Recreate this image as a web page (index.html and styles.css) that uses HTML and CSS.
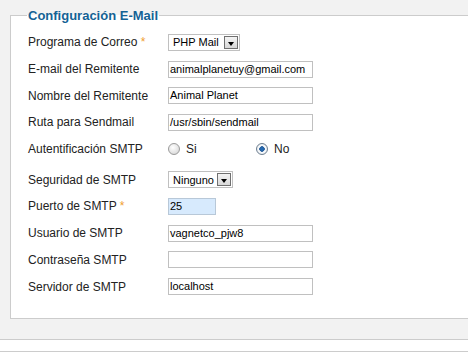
FILE: index.html
```html
<!DOCTYPE html>
<html>
<head>
    <meta charset="utf-8">
    <link rel="stylesheet" href="styles.css">
</head>
<body>
    <fieldset class="adminform">
        <legend>Configuración E-Mail</legend>

        <div class="row">
            <span class="label">Programa de Correo <span class="req">*</span></span>
            <span class="select w-mailer">PHP Mail<span class="arrow"></span></span>
        </div>
        <div class="row">
            <span class="label">E-mail del Remitente</span>
            <span class="input">animalplanetuy@gmail.com</span>
        </div>
        <div class="row">
            <span class="label">Nombre del Remitente</span>
            <span class="input">Animal Planet</span>
        </div>
        <div class="row">
            <span class="label">Ruta para Sendmail</span>
            <span class="input">/usr/sbin/sendmail</span>
        </div>
        <div class="row">
            <span class="label">Autentificación SMTP</span>
            <span class="radios">
                <span class="option"><span class="radio"></span>Si</span>
                <span class="option"><span class="radio checked"></span>No</span>
            </span>
        </div>
        <div class="row row-gap">
            <span class="label">Seguridad de SMTP</span>
            <span class="select w-secure">Ninguno<span class="arrow"></span></span>
        </div>
        <div class="row">
            <span class="label">Puerto de SMTP <span class="req">*</span></span>
            <span class="input short focused">25</span>
        </div>
        <div class="row">
            <span class="label">Usuario de SMTP</span>
            <span class="input">vagnetco_pjw8</span>
        </div>
        <div class="row">
            <span class="label">Contraseña SMTP</span>
            <span class="input"></span>
        </div>
        <div class="row">
            <span class="label">Servidor de SMTP</span>
            <span class="input">localhost</span>
        </div>
    </fieldset>

    <div class="footer"></div>
</body>
</html>
```

FILE: styles.css
```css
html {
    background: #fff;
}

body {
    margin: 0;
    background: #f2f2f2;
    font-family: "Liberation Sans", Arial, sans-serif;
    color: #222;
}

.adminform {
    margin: 8px 0 0 10px;
    padding: 6px 0 18px 17px;
    border: 1px solid #ccc;
    border-right: none;
    background: #fff;
}

.adminform legend {
    padding: 0 1px;
    margin-left: -1px;
    font-size: 13px;
    line-height: 15px;
    font-weight: bold;
    color: #146295;
}

.row {
    display: flex;
    align-items: center;
    height: 26.7px;
    font-size: 12px;
}

.row-gap {
    padding-top: 4px;
}

.label {
    width: 140px;
    flex: none;
}

.req {
    color: #f0a030;
}

.input {
    box-sizing: border-box;
    width: 145px;
    height: 17px;
    padding: 0 1px;
    border: 1px solid #c0c0c0;
    background: #fff;
    font-size: 11px;
    line-height: 15px;
    color: #000;
    white-space: nowrap;
    overflow: hidden;
}

.input.short {
    width: 48px;
}

.input.focused {
    background: #d7eafd;
    border-color: #b8c8d8;
}

.select {
    box-sizing: border-box;
    display: flex;
    align-items: center;
    justify-content: space-between;
    height: 17px;
    padding: 0 1px 0 4px;
    border: 1px solid #c0c0c0;
    background: #fff;
    font-size: 11px;
    color: #000;
    white-space: nowrap;
}

.w-mailer {
    width: 72px;
}

.w-secure {
    width: 65px;
}

.select .arrow {
    position: relative;
    flex: none;
    box-sizing: border-box;
    width: 14px;
    height: 13px;
    border: 1px solid #707070;
    background: linear-gradient(#f4f4f4, #d8d8d8);
}

.select .arrow::after {
    content: "";
    position: absolute;
    left: 3px;
    top: 5px;
    border-left: 3.5px solid transparent;
    border-right: 3.5px solid transparent;
    border-top: 4px solid #000;
}

.radios {
    display: flex;
    font-size: 12px;
}

.option {
    display: flex;
    align-items: center;
    width: 88px;
}

.radio {
    box-sizing: border-box;
    width: 12px;
    height: 12px;
    margin-right: 6px;
    border: 1px solid #9a9a9a;
    border-radius: 50%;
    background: radial-gradient(circle at 40% 35%, #fff, #d0d0d0);
}

.radio.checked {
    border-color: #6f7f90;
    background: radial-gradient(circle, #1f6fc0 0, #2a5f9a 2.5px, #fff 3px, #dde4ea 6px);
}

.footer {
    margin-top: 20px;
    height: 11px;
    border-top: 1px solid #ccc;
    border-bottom: 1px solid #ccc;
    background: #fff;
}
```
